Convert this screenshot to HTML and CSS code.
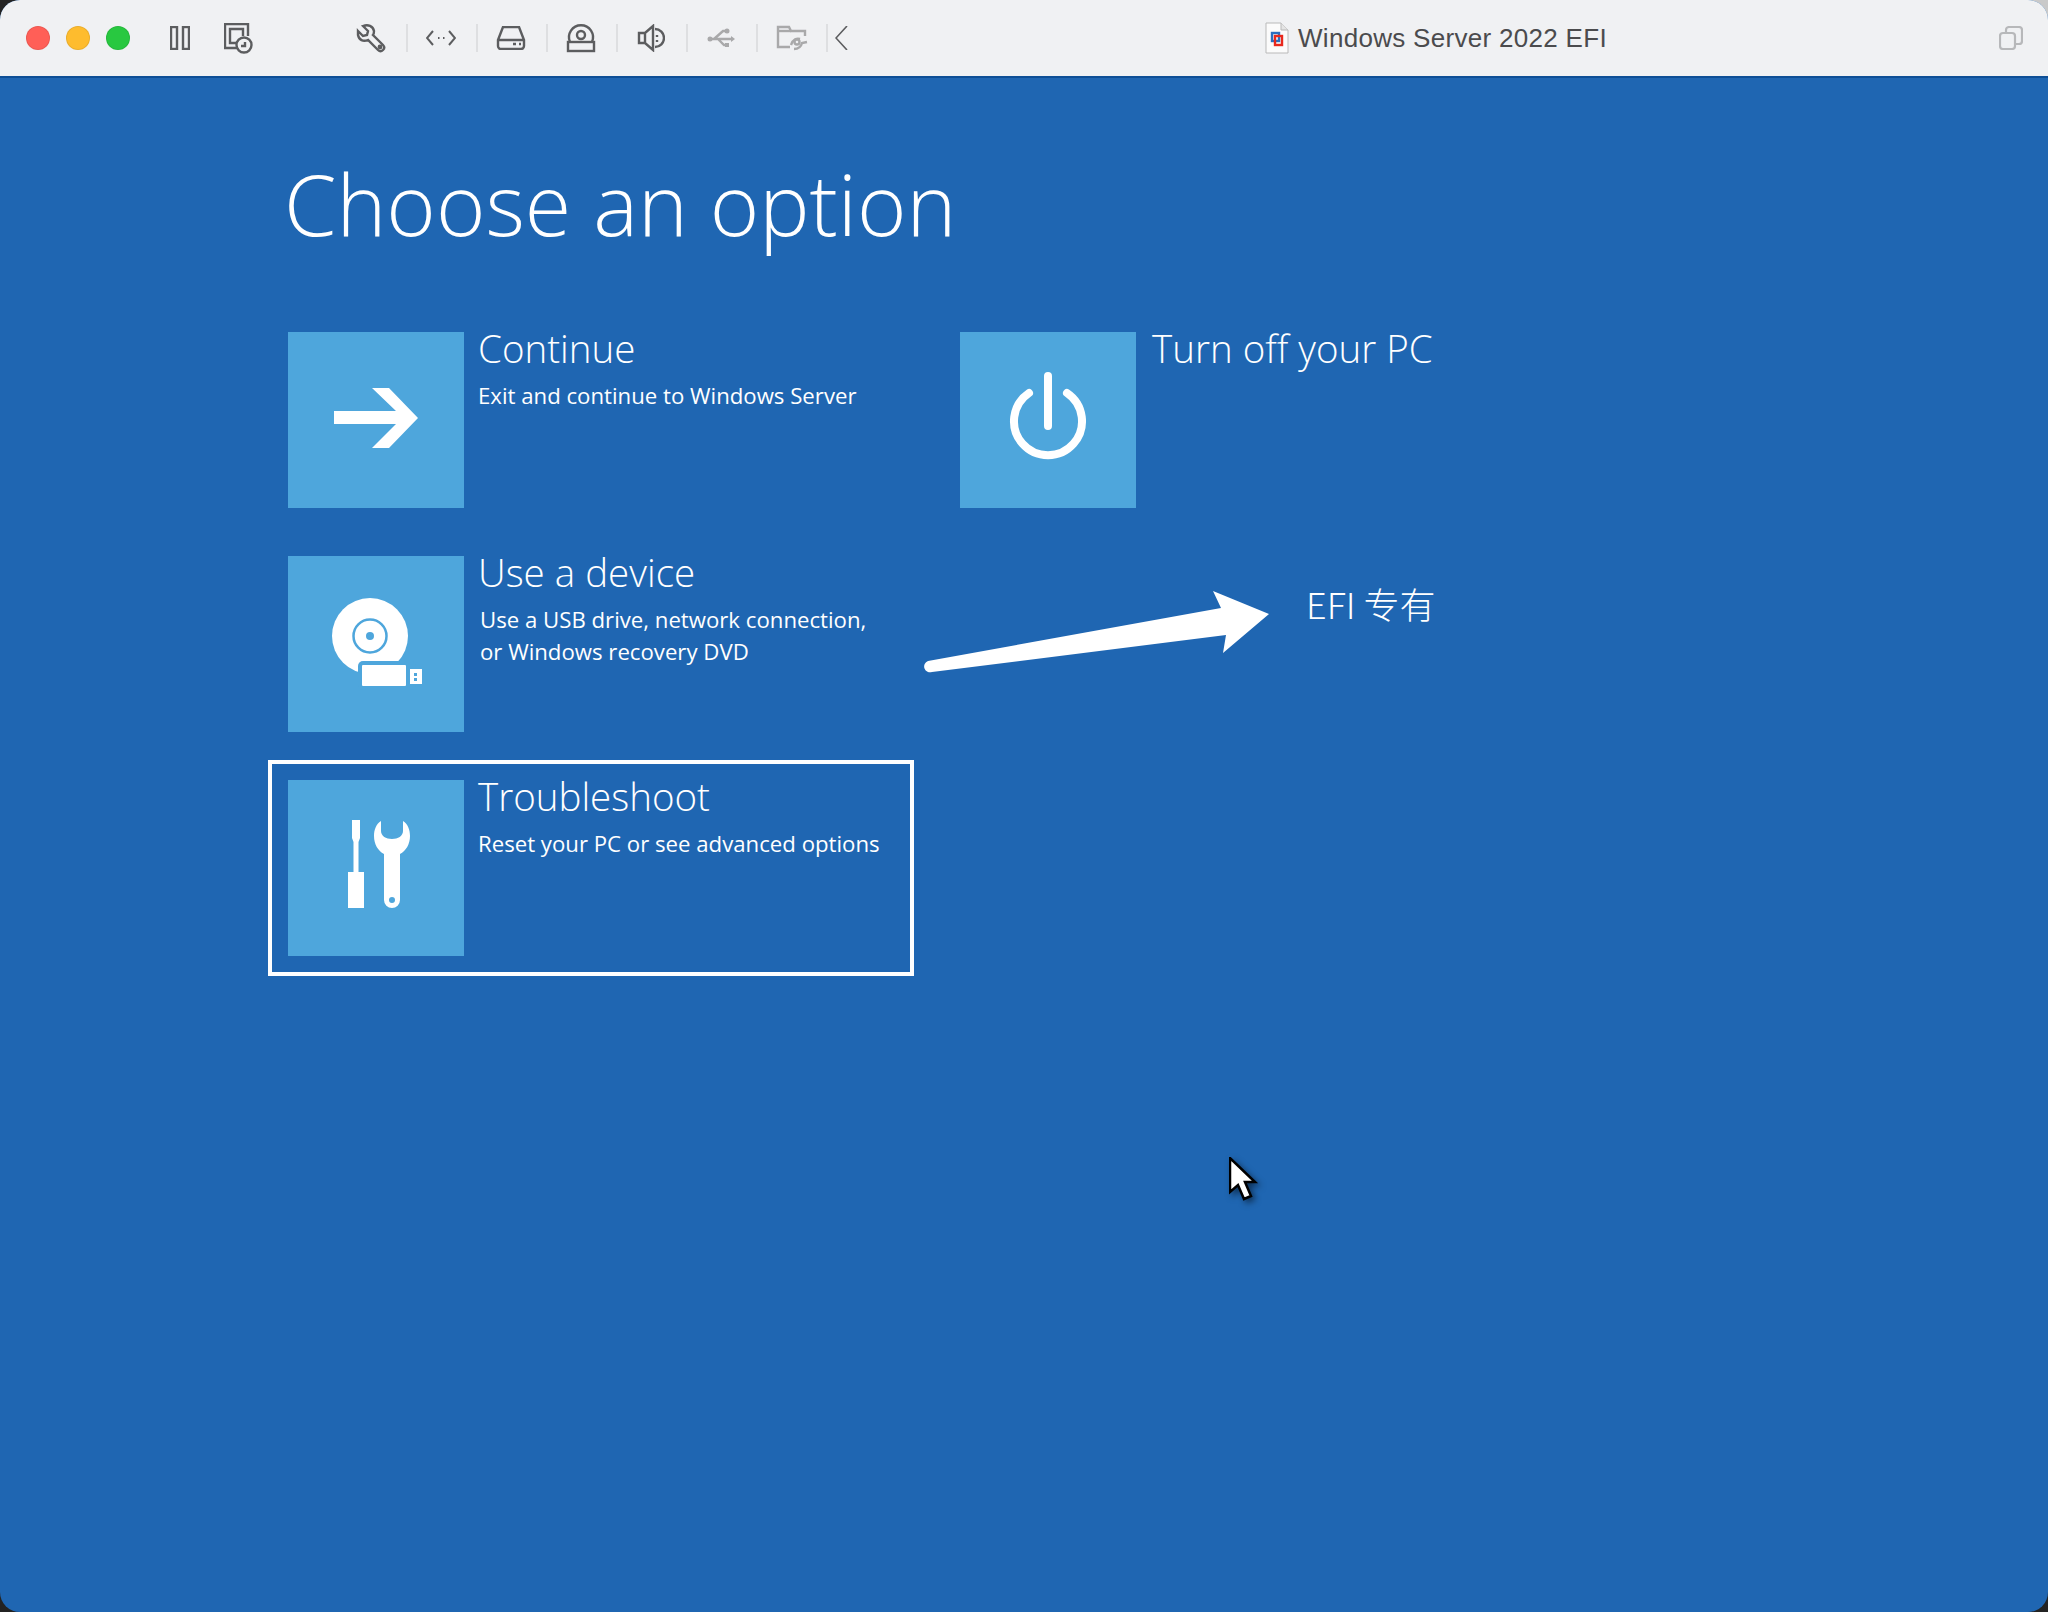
FILE: index.html
```html
<!DOCTYPE html>
<html lang="en">
<head>
<meta charset="utf-8">
<title>Windows Server 2022 EFI</title>
<link rel="stylesheet" href="styles.css">
</head>
<body>
<div class="window">
  <header class="titlebar">
    <div class="lights">
      <span class="light red"></span><span class="light yellow"></span><span class="light green"></span>
    </div>
    <svg class="icon pause" width="20" height="24" viewBox="0 0 20 24"><rect x="1" y="1" width="6" height="22"/><rect x="13" y="1" width="6" height="22"/></svg>
    <svg class="icon snapshot" width="30" height="31" viewBox="0 0 30 31"><path d="M13 25H1V1h23v12"/><path d="M19 13V6H6v14h7"/><circle class="fat" cx="20" cy="22" r="7.500"/><path d="M17 23h4v-4"/></svg>
    <div class="tools">
      <div class="tool"><svg class="icon" width="30" height="30" viewBox="0 0 30 30"><path d="M2 8l5 5 4-1 1-4-5-5c5-2 10 0 11 5 0 2 0 3-1 4l10 10c2 2 1 4 0 5s-3 2-5 0L12 17c-5 2-9 0-10-5z"/><circle cx="24" cy="24" r="1.200"/></svg></div>
      <div class="tool"><svg class="icon" width="30" height="16" viewBox="0 0 30 16"><path class="dots" d="M7 1L1 8l6 7M23 1l6 7-6 7M12 8h1.500M17 8h1.500"/></svg></div>
      <div class="tool"><svg class="icon" width="30" height="24" viewBox="0 0 30 24"><path d="M7 1h16l5 13v6a3 3 0 0 1-3 3H5a3 3 0 0 1-3-3v-6zM2 14h26"/><path d="M17 18h3M23 18h2"/></svg></div>
      <div class="tool"><svg class="icon" width="30" height="30" viewBox="0 0 30 30"><path d="M4 19a12 12 0 1 1 22 0"/><circle cx="15" cy="12" r="4"/><rect x="2" y="19" width="26" height="9"/></svg></div>
      <div class="tool"><svg class="icon" width="28" height="28" viewBox="0 0 28 28"><path d="M2 9h6l8-7v24l-8-7H2zM8 9v10"/><path d="M18 5a9 9 0 0 1 0 18M20 11v2M20 16v2"/></svg></div>
      <div class="tool"><svg class="icon dim" width="30" height="20" viewBox="0 0 30 20"><path d="M4 11h23M8 11l9-8h4M12 11l6 6h3"/><circle class="solid" cx="4" cy="11" r="2.500"/><circle class="solid" cx="21" cy="3" r="2.500"/><rect class="solid" x="19" y="15" width="4" height="4"/><path class="solid" d="M25 8l4 3-4 3z"/></svg></div>
      <div class="tool folder"><svg class="icon dim" width="32" height="26" viewBox="0 0 32 26"><path d="M14 22H2V2h11l2 4h14v5"/><path d="M2 6h13"/><path d="M15 20c2-6 6-7 9-6M18 24c4 0 7-2 8-6l5-1"/><circle cx="21" cy="17" r="2.500"/></svg></div>
    </div>
    <svg class="icon chevron" width="13" height="24" viewBox="0 0 13 24"><path d="M12 0L1 12l11 12"/></svg>
    <div class="doc">
      <svg class="doc-icon" width="24" height="32" viewBox="0 0 24 32"><path class="page" d="M1 1h15l7 7v23H1z"/><path class="fold" d="M16 1v7h7"/><rect class="link blue" x="7" y="11" width="7" height="8"/><rect class="link red-link" x="10" y="14" width="7" height="9"/></svg>
      <span class="doc-title">Windows Server 2022 EFI</span>
    </div>
    <svg class="icon restore" width="24" height="24" viewBox="0 0 24 24"><rect x="1" y="7" width="15" height="16" rx="3"/><path d="M7 7V4a3 3 0 0 1 3-3h10a3 3 0 0 1 3 3v11a3 3 0 0 1-3 3h-4"/></svg>
  </header>

  <main class="screen">
    <h1 class="heading">Choose an option</h1>
    <div class="options">
      <div class="option">
        <div class="tile"><svg class="glyph" width="176" height="176" viewBox="0 0 176 176"><path d="M46 79h62L84 56h17l29 30-29 30H84l24-24H46z"/></svg></div>
        <div class="copy"><h2>Continue</h2><p>Exit and continue to Windows Server</p></div>
      </div>
      <div class="option power">
        <div class="tile"><svg class="glyph" width="176" height="176" viewBox="0 0 176 176"><path class="power-line" d="M88 44v50M69 61a34 34 0 1 0 38 0"/></svg></div>
        <div class="copy shifted"><h2>Turn off your PC</h2></div>
      </div>
      <div class="option">
        <div class="tile"><svg class="glyph" width="176" height="176" viewBox="0 0 176 176"><circle cx="82" cy="80" r="38"/><circle class="hole" cx="82" cy="80" r="16.500"/><circle class="dot" cx="82" cy="80" r="4"/><rect class="usb-halo" x="70" y="105" width="58" height="29" rx="5"/><rect x="74" y="109" width="44" height="21" rx="1"/><path class="conn" d="M122 113h12v15h-12zM126 117v3h3v-3zM126 122v3h3v-3z"/></svg></div>
        <div class="copy nudged"><h2>Use a device</h2><p>Use a USB drive, network connection,<br>or Windows recovery DVD</p></div>
      </div>
      <div class="option focused">
        <div class="tile"><svg class="glyph" width="176" height="176" viewBox="0 0 176 176"><path d="M64 40h8v18l-1.500 4v30H76v36H60V92h5.500V62L64 58z"/><path class="wrench" d="M93 41c-5 3-7 9-7 15 0 8 4 15 10 18v46a8 8 0 0 0 16 0V74c6-3 10-10 10-18 0-6-2-12-7-15v10c0 5-5 8-11 8s-11-3-11-8zM104 117a3 3 0 1 1 0 6 3 3 0 0 1 0-6z"/></svg></div>
        <div class="copy"><h2>Troubleshoot</h2><p>Reset your PC or see advanced options</p></div>
      </div>
    </div>

    <svg class="callout" width="360" height="100" viewBox="0 0 360 100"><path d="M8 76L301 23 293 6 349 29 303 68 306 50 12 87a5.500 5.500 0 0 1-4-11z"/></svg>
    <span class="callout-label">EFI 专有</span>
    <svg class="cursor" width="34" height="50" viewBox="0 0 34 50"><path d="M1 1v34l8-7 6 14 7-3-6-14h10z"/></svg>
  </main>
</div>
</body>
</html>
```

FILE: styles.css
```css
* { box-sizing: border-box; }
html, body { margin: 0; padding: 0; }
body {
  width: 2048px;
  height: 1612px;
  background: radial-gradient(circle at 100% 0, #c9c9c9 30px, #232323 31px);
  overflow: hidden;
}

.window {
  position: relative;
  display: flex;
  flex-direction: column;
  width: 2048px;
  height: 1612px;
  border-radius: 20px;
  overflow: hidden;
  background: #1f66b2;
}

.titlebar {
  display: flex;
  align-items: center;
  flex: none;
  height: 78px;
  padding: 0 25px 0 26px;
  background: #f0f1f3;
  border-bottom: 2px solid #0e4f96;
}

.lights { display: flex; gap: 16px; }
.light { width: 24px; height: 24px; border-radius: 50%; border: 1px solid rgba(0,0,0,.08); }
.red { background: #ff5f57; }
.yellow { background: #febc2e; }
.green { background: #28c840; }

.icon { flex: none; fill: none; stroke: #5c5d5f; stroke-width: 2.4; }
.icon.dim { stroke: #a9a9aa; }
.icon .solid { fill: #a9a9aa; stroke: none; }
.icon .fat { fill: #f0f1f3; }
.icon .dots { stroke-width: 2; stroke-linejoin: miter; }

.pause { margin-left: 40px; }
.snapshot { margin-left: 34px; }

.tools { display: flex; margin-left: 84px; }
.tool {
  display: flex;
  align-items: center;
  justify-content: center;
  width: 70px;
  height: 28px;
  padding-right: 3px;
  border-right: 2px solid #dedfe1;
}
.tool.folder { padding-right: 0; }

.chevron { margin-left: 7px; stroke-width: 1.6; }

.doc { display: flex; align-items: center; gap: 9px; margin-left: 417px; }
.doc-icon { flex: none; }
.page { fill: #fbfbfb; stroke: #b9b9b9; stroke-width: 1; }
.fold { fill: #e4e4e4; stroke: #b9b9b9; stroke-width: 1; }
.link { fill: none; stroke-width: 2.4; }
.blue { stroke: #2a6fc0; }
.red-link { stroke: #e8281c; }
.doc-title {
  font: 400 26px/32px "Liberation Sans", sans-serif;
  color: #4b4b4d;
  letter-spacing: .3px;
}
.restore { margin-left: auto; stroke: #b7b8ba; stroke-width: 2.2; }

.screen {
  position: relative;
  flex: 1;
  padding: 69px 0 0 268px;
  color: #fff;
  font-family: "Open Sans", sans-serif;
}

.heading {
  margin: 0 0 51px 16px;
  font-size: 84.5px;
  line-height: 114px;
  font-weight: 300;
}

.options {
  display: grid;
  grid-template-columns: 646px 646px;
  grid-auto-rows: 216px;
  gap: 8px 26px;
}
.option {
  display: flex;
  align-items: flex-start;
  gap: 14px;
  padding: 16px;
  border: 4px solid transparent;
}
.option.focused { grid-column: 1; border-color: #fff; }

.tile { flex: none; width: 176px; height: 176px; background: #4ea6dc; }
.glyph { display: block; fill: #fff; }
.glyph .hole { fill: #fff; stroke: #4ea6dc; stroke-width: 2.5; }
.glyph .dot { fill: #4ea6dc; }
.glyph .usb-halo { fill: #4ea6dc; }
.glyph .wrench, .glyph .conn { fill-rule: evenodd; }
.glyph .power-line { fill: none; stroke: #fff; stroke-width: 8; stroke-linecap: round; }

.copy h2 {
  margin: -11px 0 0;
  font-size: 38.500px;
  line-height: 54px;
  font-weight: 300;
}
.copy p {
  margin: 5px 0 0;
  font-size: 22.200px;
  line-height: 32px;
  font-weight: 400;
}
.copy.nudged p { padding-left: 2px; }
.copy.shifted { padding-left: 2px; }

.callout { position: absolute; left: 920px; top: 507px; fill: #fff; }
.callout-label {
  position: absolute;
  left: 1306px;
  top: 501px;
  font: 300 36px/48px "Noto Sans CJK SC", "Noto Sans", sans-serif;
}
.cursor {
  position: absolute;
  left: 1229px;
  top: 1079px;
  fill: #fff;
  stroke: #000;
  stroke-width: 2.5;
  filter: drop-shadow(3px 3px 3px rgba(0,0,0,.5));
}
```
